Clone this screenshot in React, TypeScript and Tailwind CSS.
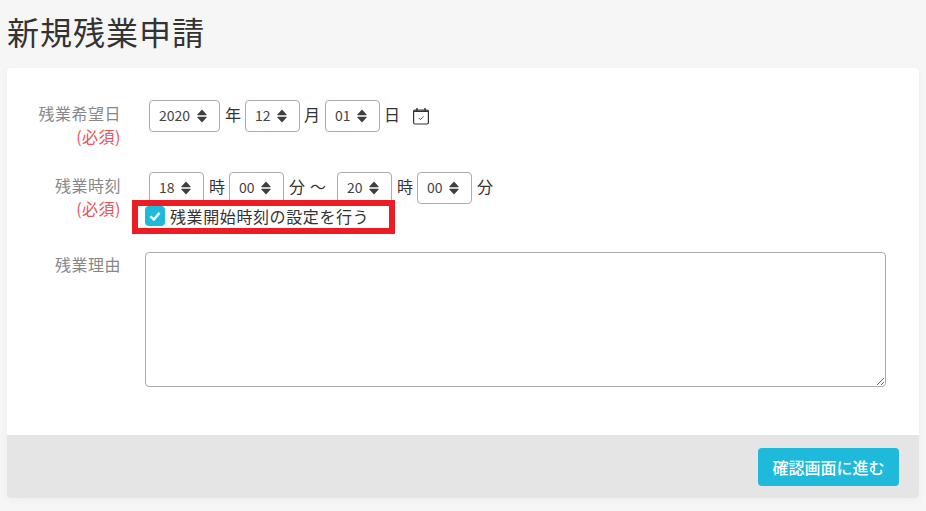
import { ReactNode } from "react";

const SortIcon = () => (
  <svg className="pointer-events-none absolute right-[13px] top-[9px] h-[14px] w-[10px]" viewBox="0 0 10 14">
    <path d="M5 0.5 L9.6 5.6 Q9.8 6.2 9.2 6.2 L0.8 6.2 Q0.2 6.2 0.4 5.6 Z" fill="#3f3f3f" />
    <path d="M5 13.5 L9.6 8.4 Q9.8 7.8 9.2 7.8 L0.8 7.8 Q0.2 7.8 0.4 8.4 Z" fill="#3f3f3f" />
  </svg>
);

const CalendarIcon = () => (
  <svg className="-mt-[1px] ml-[13px] h-[18px] w-[16px]" viewBox="0 0 16 18" fill="none">
    <rect x="0.6" y="3" width="14.8" height="14" rx="1.5" stroke="#333" strokeWidth="1.2" />
    <path d="M0.6 3.4 H15.4 V5 H0.6 Z" fill="#333" />
    <path d="M4 1 V4 M12 1 V4" stroke="#333" strokeWidth="1.4" />
    <path d="M5.8 11 L7.4 12.6 L10.4 9.4" stroke="#555" strokeWidth="1" />
  </svg>
);

const NumSelect = ({ value, width }: { value: string; width: string }) => (
  <div className={`relative ${width}`}>
    <select
      defaultValue={value}
      className="h-[32px] w-full appearance-none rounded-[4px] border border-[#ababab] bg-white pb-[1px] pl-[9px] text-[14px] text-[#444] outline-none"
    >
      <option value={value}>{value}</option>
    </select>
    <SortIcon />
  </div>
);

const Unit = ({ children, className = "" }: { children: ReactNode; className?: string }) => (
  <span className={`-mt-[4px] text-[16px] leading-[24px] text-[#333] ${className}`}>{children}</span>
);

const Label = ({ text, required }: { text: string; required?: boolean }) => (
  <div className="w-[114px] shrink-0 text-right text-[16px] leading-[24px] tracking-[0.5px] text-[#888]">
    <div>{text}</div>
    {required && <div className="-mt-[1px] text-[#e9545a]">(必須)</div>}
  </div>
);

export default function App() {
  return (
    <div className="h-[511px] overflow-hidden bg-[#f6f6f6] px-[7px] font-['Noto_Sans_CJK_JP','Noto_Sans',sans-serif]">
      <h1 className="h-[68px] pt-[8px] text-[32px] leading-[46px] tracking-[1px] text-[#333]">新規残業申請</h1>

      <div className="w-[912px] overflow-hidden rounded-[4px] bg-white shadow-[0_2px_10px_rgba(0,0,0,0.04)]">
        <div className="h-[367px] pt-[32px]">
          <div className="flex h-[72px] gap-[24px]">
            <div className="pt-[1px]">
              <Label text="残業希望日" required />
            </div>
            <div className="ml-[4px] flex items-center self-start">
              <NumSelect value="2020" width="w-[71px]" />
              <Unit className="ml-[5px] mr-[4px]">年</Unit>
              <NumSelect value="12" width="w-[55px]" />
              <Unit className="ml-[4px] mr-[5px]">月</Unit>
              <NumSelect value="01" width="w-[55px]" />
              <Unit className="ml-[4px]">日</Unit>
              <CalendarIcon />
            </div>
          </div>

          <div className="flex h-[80px] gap-[24px]">
            <div className="pt-[1px]">
              <Label text="残業時刻" required />
            </div>
            <div>
              <div className="ml-[4px] flex items-center">
                <NumSelect value="18" width="w-[55px]" />
                <Unit className="ml-[5px] mr-[4px]">時</Unit>
                <NumSelect value="00" width="w-[55px]" />
                <Unit className="ml-[5px]">分</Unit>
                <Unit className="ml-[5px] mr-[11px]">～</Unit>
                <NumSelect value="20" width="w-[55px]" />
                <Unit className="ml-[5px] mr-[4px]">時</Unit>
                <NumSelect value="00" width="w-[55px]" />
                <Unit className="ml-[5px]">分</Unit>
              </div>
              <label className="relative z-10 flex items-center gap-[5px] leading-[24px]">
                <span className="flex h-[20px] w-[20px] items-center justify-center rounded-[4px] bg-[#1fb9db]">
                  <svg className="h-[12px] w-[12px]" viewBox="0 0 10 10" fill="none">
                    <path d="M1.2 5.2 L4 8 L8.8 2.4" stroke="#fff" strokeWidth="2" />
                  </svg>
                </span>
                <span className="text-[16px] tracking-[0.6px] text-[#333]">残業開始時刻の設定を行う</span>
                <span className="pointer-events-none absolute -top-[4px] left-[-13px] h-[34px] w-[263px] border-[6px] border-[#ed1c24]" />
              </label>
            </div>
          </div>

          <div className="flex gap-[24px]">
            <div>
              <Label text="残業理由" />
            </div>
            <textarea className="h-[135px] w-[741px] rounded-[4px] border border-[#ababab] bg-white outline-none" />
          </div>
        </div>

        <div className="flex h-[63px] items-center justify-end bg-[#e5e5e5] pr-[20px]">
          <button className="h-[38px] w-[141px] rounded-[4px] bg-[#1fb9db] text-[16px] font-medium text-white">確認画面に進む</button>
        </div>
      </div>
    </div>
  );
}
